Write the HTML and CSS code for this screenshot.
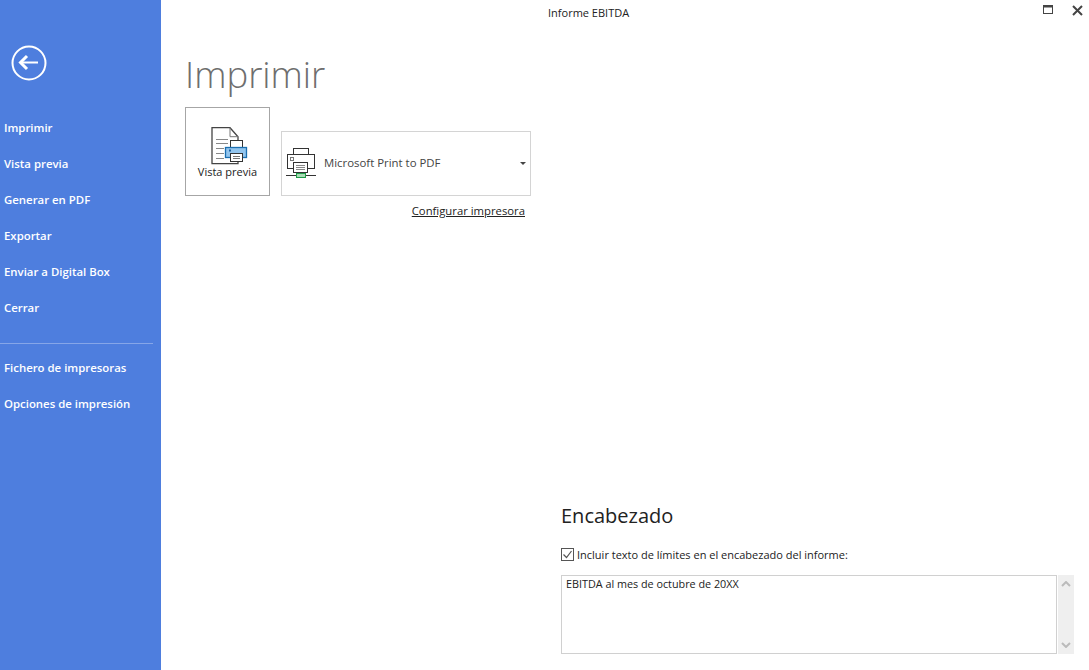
FILE: index.html
```html
<!DOCTYPE html>
<html lang="es">
<head>
  <meta charset="UTF-8" />
  <meta name="viewport" content="width=device-width, initial-scale=1.0"/>
  <title>Informe EBITDA</title>
  <link rel="stylesheet" href="styles.css">
</head>
<body>

  <div class="window">
    <nav class="sidebar">
      <button class="back" aria-label="Volver">
        <svg width="36" height="36" viewBox="0 0 36 36">
          <circle cx="18" cy="18" r="16.5" fill="none" stroke="#fff" stroke-width="2"/>
          <path d="M27 17.500H11" fill="none" stroke="#fff" stroke-width="2"/>
          <path d="M16 11l-6.500 6.500 6.500 6.500" fill="none" stroke="#fff" stroke-width="3"/>
        </svg>
      </button>

      <ul class="menu">
        <li>Imprimir</li>
        <li>Vista previa</li>
        <li>Generar en PDF</li>
        <li>Exportar</li>
        <li>Enviar a Digital Box</li>
        <li>Cerrar</li>
      </ul>
      <hr class="menu-line">
      <ul class="menu">
        <li>Fichero de impresoras</li>
        <li>Opciones de impresión</li>
      </ul>
    </nav>

    <div class="content">
      <header class="titlebar">
        <span class="window-title">Informe EBITDA</span>
        <div class="window-buttons">
          <svg width="10" height="9" viewBox="0 0 10 9">
            <rect x="0.5" y="0.5" width="9" height="8" fill="none" stroke="#444"/>
            <rect x="0" y="0" width="10" height="2.5" fill="#444"/>
          </svg>
          <svg width="11" height="11" viewBox="0 0 11 11">
            <path d="M1 1l9 9M10 1l-9 9" stroke="#444" stroke-width="2"/>
          </svg>
        </div>
      </header>

      <div class="panels">
        <section class="print-panel">
          <h1>Imprimir</h1>
          <div class="print-row">
            <button class="preview-btn">
              <svg class="preview-icon" width="37" height="38" viewBox="0 0 37 38">
                <path d="M1 .7h18l8 9v27H1z" fill="#fff" stroke="#444" stroke-width="1.3"/>
                <path d="M19 .7v9h8" fill="none" stroke="#777"/>
                <path d="M5 12.500h12M5 16.500h12M5 21.500h8M5 26.500h8M5 31.500h8" stroke="#888"/>
                <rect x="19.500" y="13.500" width="12" height="8" fill="#fff" stroke="#333"/>
                <rect x="14.500" y="20.500" width="21" height="10" fill="#92c5ee" stroke="#1b6fb0" stroke-width="1.300"/>
                <rect x="18" y="22.500" width="2" height="2" fill="#1b5f9e"/>
                <rect x="19.500" y="26.500" width="12" height="8" fill="#fff" stroke="#333"/>
                <path d="M22 29.500h7M22 31.500h7" stroke="#777"/>
              </svg>
              <span>Vista previa</span>
            </button>

            <div class="printer-col">
              <div class="printer-select">
                <svg width="32" height="32" viewBox="0 0 32 32">
                  <rect x="8.500" y="0.500" width="15" height="6" fill="#fff" stroke="#333"/>
                  <rect x="2.500" y="6.500" width="27" height="14" fill="#fff" stroke="#333"/>
                  <rect x="5.500" y="9.500" width="3" height="3" fill="none" stroke="#777"/>
                  <rect x="8.500" y="14.500" width="14" height="10" fill="#fff" stroke="#333"/>
                  <path d="M11 17.500h9M11 19.500h9M11 21.500h9" stroke="#888"/>
                  <path d="M1 27.500h30" stroke="#333"/>
                  <rect x="11.500" y="25.500" width="9" height="4" fill="#a8dcb4" stroke="#1e9a48"/>
                </svg>
                <span class="printer-name">Microsoft Print to PDF</span>
                <span class="caret"></span>
              </div>
              <a class="printer-link" href="#">Configurar impresora</a>
            </div>
          </div>
        </section>

        <section class="header-panel">
          <h2>Encabezado</h2>
          <label class="check-row">
            <svg width="13" height="13" viewBox="0 0 13 13">
              <rect x="0.500" y="0.500" width="12" height="12" fill="#fff" stroke="#555"/>
              <path d="M2.500 6.500l3 3 5-6.500" fill="none" stroke="#555" stroke-width="1.200"/>
            </svg>
            <span>Incluir texto de límites en el encabezado del informe:</span>
          </label>
          <div class="text-row">
            <div class="text-box">EBITDA al mes de octubre de 20XX</div>
            <div class="scrollbar">
              <svg width="10" height="6" viewBox="0 0 10 6"><path d="M1 5l4-4 4 4" fill="none" stroke="#bbb" stroke-width="2"/></svg>
              <svg width="10" height="6" viewBox="0 0 10 6"><path d="M1 1l4 4 4-4" fill="none" stroke="#bbb" stroke-width="2"/></svg>
            </div>
          </div>
        </section>
      </div>
    </div>
  </div>

</body>
</html>
```

FILE: styles.css
```css
* {
  box-sizing: border-box;
}

body {
  margin: 0;
  font-family: "Open Sans", "Noto Sans", sans-serif;
  font-size: 11px;
  color: #222;
  background-color: #fff;
}

.window {
  display: flex;
  height: 670px;
  overflow: hidden;
}

.sidebar {
  width: 161px;
  flex-shrink: 0;
  padding-top: 45px;
  background-color: #4e7ede;
  color: #fff;
}

.back {
  display: block;
  margin: 0 0 29px 11px;
  padding: 0;
  width: 36px;
  height: 36px;
  border: none;
  background: none;
}

.menu {
  list-style: none;
  margin: 0;
  padding: 0 0 0 4px;
}

.menu li {
  height: 36px;
  line-height: 20px;
  padding-top: 8px;
  font-size: 11.400px;
  font-weight: 600;
}

.menu-line {
  margin: 17px 8px 6px 0;
  border: none;
  border-top: 1px solid #86a6e8;
}

.content {
  flex: 1;
  display: flex;
  flex-direction: column;
  min-width: 0;
}

.titlebar {
  display: flex;
  align-items: flex-start;
  justify-content: space-between;
  height: 49px;
  padding: 5px 6px 0 387px;
}

.window-buttons {
  display: flex;
  gap: 19px;
}

.panels {
  flex: 1;
  display: flex;
  min-height: 0;
}

.print-panel {
  width: 400px;
  padding-left: 24px;
}

h1 {
  margin: 0 0 8px;
  font-size: 36.500px;
  line-height: 50px;
  font-weight: 300;
  color: #6e6e6e;
}

.print-row {
  display: flex;
  gap: 11px;
  align-items: flex-start;
}

.preview-btn {
  display: flex;
  flex-direction: column;
  align-items: center;
  width: 85px;
  height: 89px;
  padding: 19px 0 0;
  border: 1px solid #a6a6a6;
  background-color: #fff;
  font-family: inherit;
  font-size: 11px;
  color: #222;
}

.preview-icon {
  margin-left: 4px;
}

.preview-btn span {
  margin-top: -1px;
  line-height: 15px;
}

.printer-col {
  display: flex;
  flex-direction: column;
  margin-top: 24px;
  width: 250px;
}

.printer-select {
  display: flex;
  align-items: center;
  height: 65px;
  padding: 0 4px 0 3px;
  border: 1px solid #d4d4d4;
}

.printer-name {
  flex: 1;
  margin: -2px 0 0 7px;
  font-size: 11.400px;
  color: #444;
}

.caret {
  width: 0;
  height: 0;
  border-left: 3px solid transparent;
  border-right: 3px solid transparent;
  border-top: 3px solid #444;
}

.printer-link {
  align-self: flex-end;
  margin: 7px 6px 0 0;
  line-height: 16px;
  font-size: 11.300px;
  color: #222;
}

.header-panel {
  flex: 1;
  display: flex;
  flex-direction: column;
  justify-content: flex-end;
  min-width: 0;
}

h2 {
  margin: 0 0 17px;
  font-size: 20px;
  line-height: 27px;
  font-weight: 400;
  color: #222;
}

.check-row {
  display: flex;
  align-items: center;
  gap: 3px;
  height: 16px;
  margin: 0 0 13px;
}

.text-row {
  display: flex;
  gap: 1px;
  height: 79px;
  margin-bottom: 16px;
  padding-right: 15px;
}

.text-box {
  flex: 1;
  padding: 0 4px;
  line-height: 15px;
  font-size: 10.800px;
  border: 1px solid #d0d0d0;
}

.scrollbar {
  display: flex;
  flex-direction: column;
  justify-content: space-between;
  align-items: center;
  width: 16px;
  padding: 6px 0;
  background-color: #efefef;
}
```
